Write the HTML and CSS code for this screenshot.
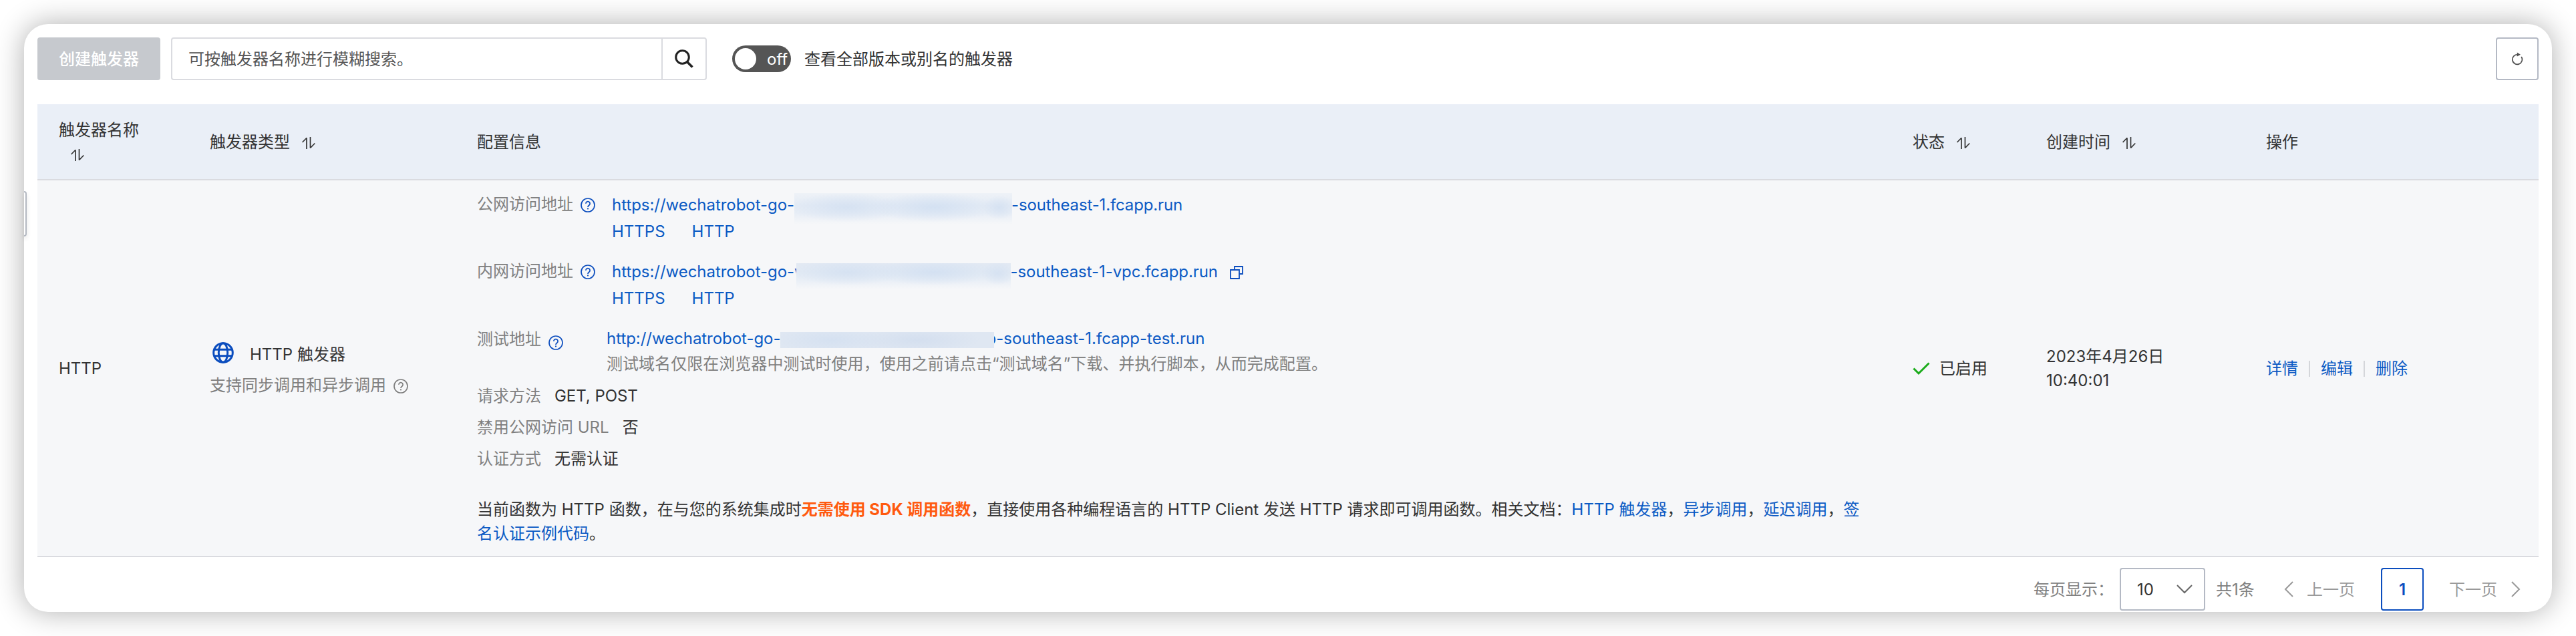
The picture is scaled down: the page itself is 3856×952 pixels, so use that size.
FILE: index.html
```html
<!DOCTYPE html>
<html lang="zh-CN">
<head>
<meta charset="utf-8">
<title>触发器管理</title>
<link rel="stylesheet" href="styles.css">
</head>
<body>
<svg class="defs" width="0" height="0">
  <symbol id="sort" viewBox="0 0 20 18"><path d="M.6 8 7 1.500V18M12.500 0v16.500L19.300 9.500" fill="none" stroke="currentColor" stroke-width="1.700" stroke-linejoin="bevel"/></symbol>
  <symbol id="help" viewBox="0 0 22 22"><circle cx="11" cy="11" r="10" fill="none" stroke="currentColor" stroke-width="1.7"/><path d="M7.900 8.700a3.100 3.100 0 1 1 4.800 2.600c-1.200.8-1.700 1.300-1.700 2.700" fill="none" stroke="currentColor" stroke-width="1.700"/><circle cx="11" cy="16.400" r="1.100" fill="currentColor"/></symbol>
</svg>
<main class="panel">
  <div class="side-handle"></div>
  <div class="toolbar">
    <button class="btn-create">创建触发器</button>
    <div class="search">
      <div class="search-input">可按触发器名称进行模糊搜索。</div>
      <div class="search-btn"><svg width="28" height="28" viewBox="0 0 28 28"><circle cx="11.500" cy="11.500" r="9.800" fill="none" stroke="#222" stroke-width="3"/><path d="M18.500 18.500 26.500 26.500" stroke="#222" stroke-width="3.600"/></svg></div>
    </div>
    <div class="switch"><span class="knob"></span><span class="switch-text">off</span></div>
    <span class="switch-label">查看全部版本或别名的触发器</span>
    <button class="btn-refresh"><svg width="18" height="20" viewBox="0 0 18 20"><path d="M15.200 7A7.300 7.300 0 1 1 10 3.800" fill="none" stroke="#505050" stroke-width="1.700"/><path d="M8.800.6 14 3.800 8.800 6.400z" fill="#505050"/></svg></button>
  </div>

  <div class="table">
    <div class="row head">
      <div class="cell"><div>触发器名称<br><svg class="sort"><use href="#sort"/></svg></div></div>
      <div class="cell"><div>触发器类型<svg class="sort"><use href="#sort"/></svg></div></div>
      <div class="cell">配置信息</div>
      <div class="cell"><div>状态<svg class="sort"><use href="#sort"/></svg></div></div>
      <div class="cell"><div>创建时间<svg class="sort"><use href="#sort"/></svg></div></div>
      <div class="cell">操作</div>
    </div>
    <div class="row body">
      <div class="cell">HTTP</div>
      <div class="cell">
        <div class="kind">
          <div class="kind-title">
            <svg width="32" height="32" viewBox="0 0 32 32" fill="none" stroke="#0b4dbe" stroke-width="3"><circle cx="16" cy="16" r="14.300"/><ellipse cx="16" cy="16" rx="6.700" ry="14.300"/><path d="M2 11.200h28M2 20.800h28"/></svg>
            <span>HTTP 触发器</span>
          </div>
          <div class="kind-desc">支持同步调用和异步调用<svg class="help"><use href="#help"/></svg></div>
        </div>
      </div>
      <div class="cell config">
        <div class="addr">
          <div class="label">公网访问地址<svg class="help"><use href="#help"/></svg></div>
          <div>
            <div class="link"><span class="host">https://wechatrobot-go-</span><span class="mask m1"></span><span class="l1">-southeast-1.fcapp.run</span></div>
            <div class="protocols"><a>HTTPS</a><a>HTTP</a></div>
          </div>
        </div>
        <div class="addr">
          <div class="label">内网访问地址<svg class="help"><use href="#help"/></svg></div>
          <div>
            <div class="link"><span class="host wide">https://wechatrobot-go-w</span><span class="mask m2"></span><span class="l2">-southeast-1-vpc.fcapp.run</span>
              <svg class="copy" width="20" height="20" viewBox="0 0 20 20" fill="none" stroke="#0b4dbe" stroke-width="1.800"><path d="M1 6h13v13H1z"/><path d="M7 6V1h12v11h-5"/></svg></div>
            <div class="protocols"><a>HTTPS</a><a>HTTP</a></div>
          </div>
        </div>
        <div class="addr test">
          <div class="label">测试地址<svg class="help low"><use href="#help"/></svg></div>
          <div>
            <div class="link"><span class="host">http://wechatrobot-go-</span><span class="mask m3"></span><span class="l3">p-southeast-1.fcapp-test.run</span></div>
            <div class="tip">测试域名仅限在浏览器中测试时使用，使用之前请点击“测试域名”下载、并执行脚本，从而完成配置。</div>
          </div>
        </div>
        <div class="prop"><span>请求方法</span><b>GET, POST</b></div>
        <div class="prop"><span>禁用公网访问 URL</span><b>否</b></div>
        <div class="prop"><span>认证方式</span><b>无需认证</b></div>
        <p class="note">当前函数为 HTTP 函数，在与您的系统集成时<strong>无需使用 SDK 调用函数</strong>，直接使用各种编程语言的 HTTP Client 发送 HTTP 请求即可调用函数。相关文档：<a>HTTP 触发器</a>，<a>异步调用</a>，<a>延迟调用</a>，<a>签<br>名认证示例代码</a>。</p>
      </div>
      <div class="cell status"><svg width="26" height="20" viewBox="0 0 26 20"><path d="M1.500 9.500 9 17 24.500 1.500" fill="none" stroke="#1aab1a" stroke-width="3"/></svg><span>已启用</span></div>
      <div class="cell"><div>2023年4月26日<br>10:40:01</div></div>
      <div class="cell actions"><a>详情</a><i></i><a>编辑</a><i></i><a>删除</a></div>
    </div>
  </div>

  <div class="pager">
    <span class="per">每页显示：</span>
    <div class="select"><span>10</span><svg width="24" height="14" viewBox="0 0 24 14"><path d="M1 1 12 12 23 1" fill="none" stroke="#666" stroke-width="2"/></svg></div>
    <span class="total">共1条</span>
    <div class="prev"><svg width="14" height="24" viewBox="0 0 14 24"><path d="M13 1 2 12 13 23" fill="none" stroke="#999" stroke-width="2"/></svg><span>上一页</span></div>
    <div class="current">1</div>
    <div class="next"><span>下一页</span><svg width="14" height="24" viewBox="0 0 14 24"><path d="M1 1 12 12 1 23" fill="none" stroke="#999" stroke-width="2"/></svg></div>
  </div>
</main>
</body>
</html>
```
FILE: styles.css
```css
* { box-sizing: border-box; }
body {
  margin: 0;
  padding: 36px;
  height: 952px;
  overflow: hidden;
  background: #fff;
  color: #333;
  font: 24px/36px Inter, "Noto Sans CJK SC", sans-serif;
  white-space: nowrap;
}
button { font: inherit; padding: 0; }
svg { flex: none; }
.defs { position: absolute; }
.panel {
  position: relative;
  width: 3784px;
  height: 880px;
  padding: 20px 20px 0;
  background: #fff;
  border-radius: 36px;
  box-shadow: 0 0 44px rgba(0, 0, 0, .32);
}
.side-handle {
  position: absolute;
  left: 0;
  top: 250px;
  width: 4px;
  height: 68px;
  border: 2px solid #b4b9c2;
  border-left: 0;
  border-radius: 0 4px 4px 0;
  box-shadow: 0 4px 6px rgba(0, 0, 0, .12);
}

/* toolbar */
.toolbar { display: flex; align-items: center; height: 64px; }
.btn-create {
  width: 184px;
  height: 64px;
  padding-top: 1px;
  border: 0;
  border-radius: 4px;
  background: #c6c9ce;
  color: #fff;
  font-weight: 500;
}
.search {
  display: flex;
  width: 802px;
  height: 64px;
  margin-left: 16px;
  border: 2px solid #dadbe0;
  border-radius: 4px;
}
.search-input { flex: 1; padding-left: 24px; line-height: 62px; color: #555; }
.search-btn {
  display: flex;
  align-items: center;
  justify-content: center;
  width: 66px;
  border-left: 2px solid #dadbe0;
}
.switch {
  display: flex;
  align-items: center;
  width: 88px;
  height: 40px;
  margin-left: 38px;
  padding: 0 4px;
  border-radius: 20px;
  background: #555;
  color: #fff;
}
.knob { width: 32px; height: 32px; border-radius: 50%; background: #fff; }
.switch-text { margin: 2px 0 0 16px; }
.switch-label { margin: 2px 0 0 20px; }
.btn-refresh {
  display: flex;
  align-items: center;
  justify-content: center;
  width: 64px;
  height: 64px;
  margin-left: auto;
  border: 2px solid #b4b9c4;
  border-radius: 4px;
  background: #fff;
}

/* table */
.table { margin-top: 36px; }
.row {
  display: grid;
  grid-template-columns: 226px 400px 2149px 200px 329px 1fr;
  border-bottom: 2px solid #dadbe0;
}
.head { height: 114px; background: #eaeff7; }
.body { height: 564px; background: #f6f7f9; }
.cell { display: flex; align-items: center; padding: 2px 0 0 32px; }
.sort { width: 20px; height: 18px; margin-left: 18px; vertical-align: -2px; }
.help { width: 22px; height: 22px; color: #0b4dbe; margin-left: 11px; }
a, .link { color: #0b5ac4; }

.kind { padding-top: 9px; }
.kind-title { display: flex; align-items: center; height: 40px; padding-left: 4px; }
.kind-title svg { margin-top: -6px; }
.kind-title span { margin-left: 24px; }
.kind-desc { display: flex; align-items: center; height: 52px; color: #808080; }
.kind-desc .help { color: #808080; margin-top: 2px; }

.config { flex-direction: column; align-items: stretch; padding-top: 17px; }
.addr { display: flex; height: 100px; line-height: 40px; }
.label { display: flex; align-items: center; width: 202px; height: 38px; color: #808080; }
.label .help { margin-top: 1px; }
.link { display: flex; height: 40px; }
.host { width: 273px; letter-spacing: -.04px; }
.mask { position: relative; background: #e5ecf5; flex: none; }
.m1 {
  width: 326px; height: 47px; margin-top: 2px;
  background: radial-gradient(ellipse 85px 22px at 24% 45%, #d6e2f2, transparent), radial-gradient(ellipse 95px 22px at 64% 45%, #d4e1f2, transparent), radial-gradient(ellipse 25px 18px at 94% 46%, #d6e2f2, transparent), linear-gradient(#eef2f7, #e4ebf5 40%, #e8eef6 65%, #f6f7f9);
}
.wide { width: 275.500px; }
.m2 {
  width: 321px; height: 39px; margin-top: 7px;
  background: radial-gradient(ellipse 85px 20px at 24% 34%, #d6e2f2, transparent), radial-gradient(ellipse 95px 20px at 64% 34%, #d4e1f2, transparent), radial-gradient(ellipse 25px 18px at 94% 38%, #d6e2f2, transparent), linear-gradient(#e2e9f3, #e2eaf4 35%, #e8eef6 62%, #f6f7f9);
}
.m3 {
  width: 320px; height: 24px; margin-top: 10px;
  background: radial-gradient(ellipse 85px 20px at 24% 50%, #d5e1f1, transparent), radial-gradient(ellipse 95px 20px at 64% 50%, #d4dfef, transparent), #dfe7f2;
}
.l1 { margin-left: -1px; letter-spacing: -.14px; }
.l2 { letter-spacing: -.06px; }
.l3 { margin-left: -11px; }
.copy { margin: 11px 0 0 18px; }
.protocols { display: flex; gap: 40px; line-height: 39px; }
.test { height: 83px; }
.test .label { width: 194px; height: 41px; }
.test .label .low { margin-top: 10px; }
.test .host { width: 259.500px; }
.tip { line-height: 36px; color: #808080; letter-spacing: .04px; }
.prop { display: flex; height: 47px; line-height: 46px; }
.prop span { color: #808080; }
.prop b { margin-left: 20px; font-weight: 400; letter-spacing: -.05px; }
.note { margin: 34px 0 0; line-height: 36px; }
.note strong { color: #ff5a0f; font-weight: 700; }
.status svg { margin-top: -1px; }
.status span { margin-left: 14px; }
.actions i { width: 2px; height: 24px; margin: 0 16px; background: #d4d6da; }

/* pagination */
.pager {
  display: flex;
  align-items: center;
  height: 64px;
  margin-top: 16px;
  padding-left: 2988px;
  color: #808080;
}
.per { width: 129px; padding-top: 2px; }
.select {
  display: flex;
  align-items: center;
  justify-content: space-between;
  width: 128px;
  height: 64px;
  padding: 0 17px 0 24px;
  border: 2px solid #b4b9c4;
  border-radius: 4px;
  color: #333;
}
.select span { padding-top: 2px; }
.total { width: 118px; padding: 2px 0 0 16px; }
.prev, .next { display: flex; align-items: center; color: #999; }
.prev { width: 145px; }
.prev span { margin: 2px 0 0 20px; }
.current {
  width: 64px;
  height: 64px;
  border: 2px solid #0b4dbe;
  border-radius: 4px;
  color: #0b4dbe;
  font-weight: 600;
  line-height: 62px;
  text-align: center;
}
.next { margin-left: 38px; }
.next span { padding-top: 2px; }
.next svg { margin-left: 21px; }
```
